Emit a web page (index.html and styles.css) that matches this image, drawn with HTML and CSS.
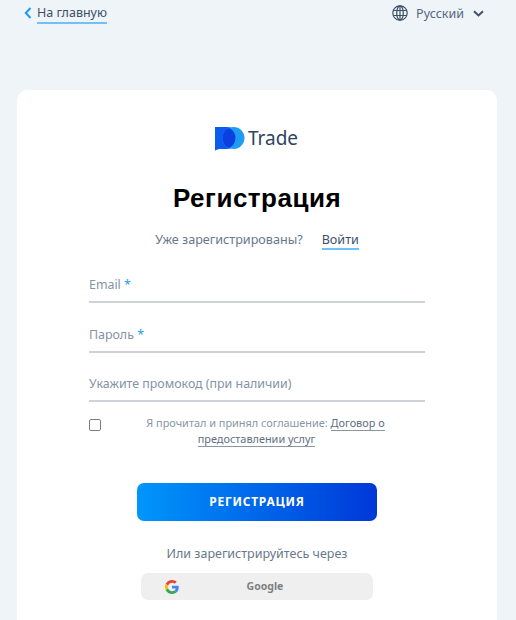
FILE: index.html
```html
<!DOCTYPE html>
<html lang="ru">
<head>
    <meta charset="UTF-8">
    <meta name="viewport" content="width=device-width, initial-scale=1.0">
    <title>Регистрация</title>
    <link rel="stylesheet" href="styles.css">
</head>
<body>
    <header class="topbar">
        <a href="#" class="back-link">
            <svg class="back-icon" width="8" height="12" viewBox="0 0 8 12"><path d="M6.500 1 1.800 6l4.700 5" fill="none" stroke="#1e9bf5" stroke-width="2"/></svg>
            <span class="underlined">На главную</span>
        </a>
        <div class="lang">
            <svg width="16" height="16" viewBox="0 0 16 16" fill="none" stroke="#3d5068" stroke-width="1.2">
                <circle cx="8" cy="8" r="7.2"/>
                <ellipse cx="8" cy="8" rx="3.3" ry="7.2"/>
                <path d="M8 .8v14.400M1.200 5.500h13.600M1.200 10.500h13.600"/>
            </svg>
            <span class="lang-name">Русский</span>
            <svg width="11" height="7" viewBox="0 0 11 7"><path d="M1 1.200 5.500 5.400 10 1.200" fill="none" stroke="#3d5068" stroke-width="2"/></svg>
        </div>
    </header>

    <main class="card">
        <div class="logo">
            <svg width="30" height="25" viewBox="0 0 30 25">
                <path d="M0 1h12a11 11 0 0 1 0 22H4l-4 1.500z" fill="#0a5cf0"/>
                <circle cx="18.500" cy="12" r="11" fill="#1e9bf5"/>
                <path d="M14 2a11 11 0 0 1 0 20 11 11 0 0 1 0-20z" fill="#0a3fe0"/>
            </svg>
            <span class="logo-text">Trade</span>
        </div>

        <h1>Регистрация</h1>

        <p class="login-line">
            <span>Уже зарегистрированы?</span>
            <a href="#" class="underlined login-link">Войти</a>
        </p>

        <form class="form">
            <div class="field">Email <span class="req">*</span></div>
            <div class="field">Пароль <span class="req">*</span></div>
            <div class="field">Укажите промокод (при наличии)</div>

            <div class="agree">
                <span class="checkbox"></span>
                <p class="agree-text">Я прочитал и принял соглашение: <a href="#" class="doc-link">Договор о</a> <a href="#" class="doc-link doc-link-end">предоставлении услуг</a></p>
            </div>

            <button type="button" class="submit">РЕГИСТРАЦИЯ</button>
        </form>

        <p class="alt-line">Или зарегистрируйтесь через</p>

        <a href="#" class="google">
            <svg class="google-icon" width="14" height="14" viewBox="0 0 48 48">
                <path fill="#ea4335" d="M24 9.500c3.500 0 6.700 1.200 9.200 3.600l6.900-6.900C35.900 2.400 30.400 0 24 0 14.600 0 6.500 5.400 2.600 13.200l8 6.200C12.500 13.700 17.800 9.500 24 9.500z"/>
                <path fill="#4285f4" d="M47 24.500c0-1.600-.1-3.100-.4-4.500H24v9h12.900c-.6 3-2.200 5.500-4.700 7.200l7.700 6C44.400 38 47 31.800 47 24.500z"/>
                <path fill="#fbbc05" d="M10.600 28.600a14.500 14.500 0 0 1 0-9.200l-8-6.200a24 24 0 0 0 0 21.600z"/>
                <path fill="#34a853" d="M24 48c6.500 0 11.900-2.100 15.900-5.800l-7.700-6c-2.200 1.400-4.900 2.300-8.200 2.300-6.200 0-11.500-4.200-13.400-9.900l-8 6.200C6.500 42.600 14.600 48 24 48z"/>
            </svg>
            <span class="google-text">Google</span>
        </a>
    </main>
</body>
</html>
```

FILE: styles.css
```css
html, body {
    height: 620px;
    overflow: hidden;
}

body {
    display: flex;
    flex-direction: column;
    margin: 0;
    font-family: 'Noto Sans', sans-serif;
    background-color: #eff4f9;
    color: #3d5068;
}

a {
    color: inherit;
    text-decoration: none;
}

.topbar {
    flex: none;
    display: flex;
    align-items: flex-start;
    justify-content: space-between;
    height: 90px;
    padding: 3px 32px 0 24px;
    box-sizing: border-box;
}

.back-link {
    display: flex;
    align-items: center;
    gap: 5px;
    margin-top: 2px;
    font-size: 12.5px;
}

.back-link .underlined {
    padding-bottom: 1px;
}

.back-icon {
    margin-bottom: 3px;
}

.underlined {
    display: inline-block;
    line-height: 16px;
    border-bottom: 2px solid #6fc1f7;
}

.lang {
    display: flex;
    align-items: center;
    height: 20px;
    font-size: 12.5px;
    color: #55677d;
}

.lang-name {
    margin: 0 9px 0 8px;
}

.card {
    flex: 1;
    display: flex;
    flex-direction: column;
    align-items: center;
    margin: 0 19px 0 17px;
    padding-top: 35px;
    background: #ffffff;
    border-radius: 10px 10px 0 0;
}

.logo {
    display: flex;
    align-items: center;
    gap: 3px;
    height: 26px;
    margin-left: -1px;
}

.logo-text {
    font-size: 19px;
    color: #2f4560;
}

h1 {
    margin: 31px 0 0;
    font-family: 'Liberation Sans', sans-serif;
    font-size: 26px;
    font-weight: 700;
    line-height: 32px;
    letter-spacing: 0.5px;
    color: #000000;
}

.login-line {
    display: flex;
    align-items: flex-start;
    gap: 19px;
    height: 18px;
    margin: 18px 0 0;
    font-size: 12.6px;
    line-height: 16px;
    color: #69778a;
}

.login-link {
    color: #3d5068;
}

.form {
    display: flex;
    flex-direction: column;
    width: 336px;
    margin-top: 25px;
}

.field {
    height: 26px;
    margin-bottom: 21.5px;
    font-size: 12.4px;
    line-height: 20px;
    color: #8593a5;
    border-bottom: 2px solid #cfd3d9;
}

.req {
    color: #1e9bf5;
}

.agree {
    display: flex;
    align-items: flex-start;
    margin-top: -9px;
}

.checkbox {
    flex: none;
    width: 10px;
    height: 10px;
    margin-top: 4px;
    border: 1px solid #7d7d7d;
    border-radius: 2px;
}

.agree-text {
    flex: 1;
    margin: 0;
    padding-left: 5px;
    font-size: 10.9px;
    line-height: 16px;
    text-align: center;
    color: #8a96a6;
}

.doc-link {
    color: #5f6f84;
    border-bottom: 1px solid #8a96a6;
}

.doc-link-end {
    margin-right: 18px;
}

.submit {
    align-self: center;
    width: 240px;
    height: 38px;
    margin-top: 36px;
    padding: 0;
    border: none;
    border-radius: 7px;
    background: linear-gradient(90deg, #0096fb, #0038d8);
    font-family: inherit;
    font-size: 12px;
    font-weight: 700;
    letter-spacing: 0.75px;
    color: #ffffff;
}

.alt-line {
    margin: 23px 0 0;
    font-size: 12.5px;
    line-height: 20px;
    color: #69778a;
}

.google {
    position: relative;
    display: flex;
    align-items: center;
    justify-content: center;
    box-sizing: border-box;
    width: 232px;
    height: 27px;
    margin-top: 9px;
    padding-left: 16px;
    background: #efefef;
    border-radius: 7px;
}

.google-icon {
    position: absolute;
    left: 24px;
    top: 7px;
}

.google-text {
    font-size: 10.5px;
    font-weight: 700;
    color: #808080;
}
```
